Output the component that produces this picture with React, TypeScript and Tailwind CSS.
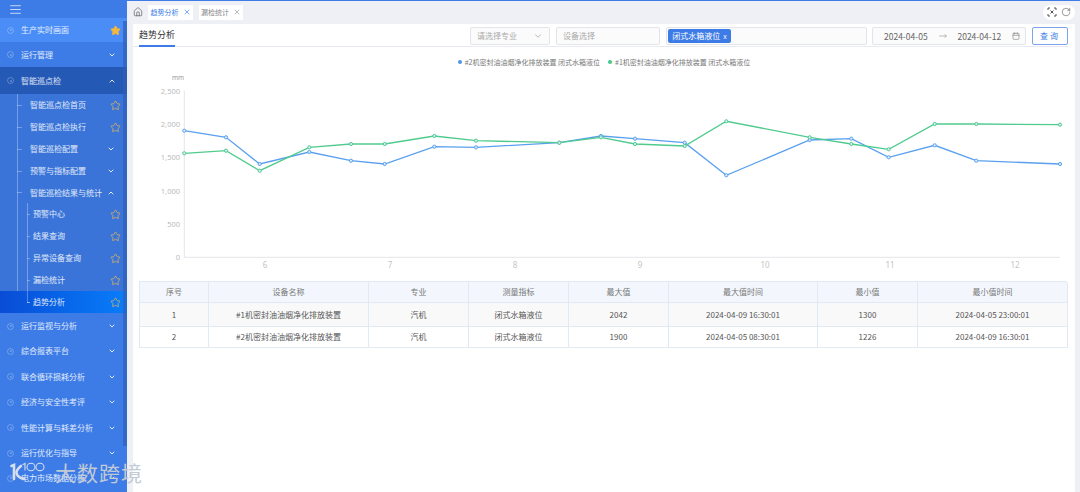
import React from "react";
import {
  AlignJustify,
  Calendar,
  ChevronDown,
  ChevronUp,
  Home,
  MoveRight,
  RotateCw,
  Star,
  X,
} from "lucide-react";

const topItems = ["运行监视与分析", "综合报表平台", "联合循环损耗分析", "经济与安全性考评", "性能计算与耗差分析", "运行优化与指导", "电力市场数据分析"];
const subItems = [
  { label: "智能巡点检首页", star: true },
  { label: "智能巡点检执行", star: true },
  { label: "智能巡检配置", down: true },
  { label: "预警与指标配置", down: true },
];
const leafItems = ["预警中心", "结果查询", "异常设备查询", "漏检统计"];

const xs = [184.3, 226, 259.7, 309.3, 351, 384.7, 434.3, 476, 559.3, 601, 635, 684.7, 726.3, 809.7, 851.3, 888.7, 934.7, 976.3, 1060];
const blueYs = [130.7, 137.3, 164, 152, 160.7, 164, 146.7, 147.3, 142.7, 136, 138.7, 142.7, 175.3, 140, 138.7, 157.3, 145.3, 160.7, 164];
const greenYs = [153.3, 150.7, 170.7, 147.3, 144, 144, 136, 140.7, 142.7, 137.3, 144, 146, 121.3, 137.3, 144, 149.3, 124, 124, 124.7];

const yTicks = [
  { label: "2,500", y: 90.7 },
  { label: "2,000", y: 124 },
  { label: "1,500", y: 157.3 },
  { label: "1,000", y: 190.7 },
  { label: "500", y: 224 },
  { label: "0", y: 257.3 },
];
const xTicks = [
  { label: "6", x: 265 },
  { label: "7", x: 390 },
  { label: "8", x: 515 },
  { label: "9", x: 640 },
  { label: "10", x: 765 },
  { label: "11", x: 890 },
  { label: "12", x: 1015 },
];

const columns = [
  { title: "序号", width: "w-[70px]" },
  { title: "设备名称", width: "w-[160px]" },
  { title: "专业", width: "w-[100px]" },
  { title: "测量指标", width: "w-[100px]" },
  { title: "最大值", width: "w-[100px]" },
  { title: "最大值时间", width: "w-[149px]" },
  { title: "最小值", width: "w-[100px]" },
  { title: "最小值时间", width: "w-[150px]" },
];
const rows = [
  ["1", "#1机密封油油烟净化排放装置", "汽机", "闭式水箱液位", "2042", "2024-04-09 16:30:01", "1300", "2024-04-05 23:00:01"],
  ["2", "#2机密封油油烟净化排放装置", "汽机", "闭式水箱液位", "1900", "2024-04-05 08:30:01", "1226", "2024-04-09 16:30:01"],
];

function Dot() {
  return <span className="w-[7px] h-[7px] rounded-full border border-white/25 mx-[7px] shrink-0 flex items-center justify-center"><span className="w-[2px] h-[2px] rounded-full bg-white/30" /></span>;
}

function OutlineStar() {
  return <Star size={11} strokeWidth={1.6} className="text-[#e3b65a] shrink-0" />;
}

function TopRow({ label, open }: { label: string; open?: boolean }) {
  return (
    <div className={`flex items-center pr-[12px] ${open ? "bg-[#2559b6] h-[27px]" : "h-[25.4px]"}`}>
      <Dot />
      <span className="flex-1 whitespace-nowrap">{label}</span>
      {open ? <ChevronUp size={8} strokeWidth={3} className="mr-[-1px]" /> : <ChevronDown size={8} strokeWidth={3} className="mr-[-1px]" />}
    </div>
  );
}

function Sidebar() {
  return (
    <aside className="relative w-[127px] h-full shrink-0 bg-[#3d7ce6] text-white/85 text-[8px] overflow-hidden">
      <div className="h-[17px] pl-[9px] flex items-center">
        <AlignJustify size={13} strokeWidth={1.3} className="text-white" />
      </div>
      <div className="h-[24px] flex items-center pr-[6px] bg-[#4a8df7]">
        <Dot />
        <span className="flex-1">生产实时画面</span>
        <Star size={11} className="text-[#f5b63c] fill-[#f5b63c]" />
      </div>
      <TopRow label="运行管理" />
      <TopRow label="智能巡点检" open />

      <div className="relative bg-[#3a74d8]">
        <span className="absolute left-[17px] top-0 bottom-[6px] w-px bg-white/30" />
        {subItems.map((item) => (
          <div key={item.label} className="h-[22px] flex items-center pl-[17px] pr-[6px]">
            <span className="w-[5px] h-px bg-white/30 mr-[8px]" />
            <span className="flex-1">{item.label}</span>
            {item.star ? <OutlineStar /> : <ChevronDown size={8} strokeWidth={3} className="mr-[6px]" />}
          </div>
        ))}
        <div className="h-[21px] flex items-center pl-[17px] pr-[12px]">
          <span className="w-[5px] h-px bg-white/30 mr-[8px]" />
          <span className="flex-1 whitespace-nowrap">智能巡检结果与统计</span>
          <ChevronUp size={8} strokeWidth={3} />
        </div>
        <div className="relative">
          <span className="absolute left-[27px] top-0 bottom-[10px] w-px bg-white/30" />
          {leafItems.map((label) => (
            <div key={label} className="h-[22px] flex items-center pl-[27px] pr-[6px]">
              <span className="w-[3px] h-px bg-white/30 mr-[3px]" />
              <span className="flex-1">{label}</span>
              <OutlineStar />
            </div>
          ))}
          <div className="h-[22px] flex items-center pl-[27px] pr-[6px] bg-gradient-to-r from-[#0a4cd6] to-[#0a7dfa]">
            <span className="w-[3px] h-px bg-white/50 mr-[3px]" />
            <span className="flex-1">趋势分析</span>
            <OutlineStar />
          </div>
        </div>
      </div>

      {topItems.map((label) => (
        <TopRow key={label} label={label} />
      ))}

      <span className="absolute right-0 top-[20px] w-[4px] h-[425px] bg-[#2d5fb8]/70" />
    </aside>
  );
}

function Watermark() {
  return (
    <div className="absolute left-[10px] top-[461px] flex items-start gap-[8px] pointer-events-none">
      <svg width="37" height="20" viewBox="0 0 37 20" fill="none" stroke="#d5deec" strokeLinecap="round">
        <path d="M1.5 4 L4 3 V17" strokeWidth="2.6" />
        <path d="M11 4 C8 6.5 6.5 8.5 6.5 10.5 C6.5 13.5 10 16 14 17" strokeWidth="2.6" />
        <path d="M13 2.5 L15 1.5 V8" strokeWidth="1.1" />
        <ellipse cx="21" cy="5" rx="4" ry="3.8" strokeWidth="1.1" />
        <ellipse cx="30" cy="5" rx="4" ry="3.8" strokeWidth="1.1" />
      </svg>
      <span className="text-[21px] leading-none tracking-[1px] text-[#c2cad6] font-['Noto_Sans_CJK_SC',sans-serif]">大数跨境</span>
    </div>
  );
}

function Toolbar() {
  return (
    <div className="h-[23px] flex items-center pl-[6px] pr-[5px] shrink-0 pb-[1px]">
      <Home size={10} strokeWidth={1.6} className="text-[#555] mr-[5px]" />
      <div className="flex items-center gap-[6px]">
        <div className="h-[15px] w-[45px] bg-white flex items-center justify-center gap-[4px] text-[7px] text-[#3d7ce6]">
          趋势分析 <X size={8} />
        </div>
        <div className="h-[15px] w-[44px] bg-white flex items-center justify-center gap-[4px] text-[7px] text-[#888]">
          漏检统计 <X size={8} className="text-[#999]" />
        </div>
      </div>
      <div className="ml-auto h-[15px] w-[32px] bg-white rounded-full flex items-center justify-center gap-[4px] text-[#555]">
        <svg width="10" height="10" viewBox="0 0 10 10" fill="none" stroke="currentColor" strokeWidth="1">
          <path d="M1 3V1H3M7 1H9V3M9 7V9H7M3 9H1V7" />
          <path d="M3.5 3.5L6.5 6.5M6.5 3.5L3.5 6.5" />
        </svg>
        <RotateCw size={10} strokeWidth={1.4} />
      </div>
    </div>
  );
}

function Filters() {
  const box = "h-[18px] border border-[#e2e5ea] rounded-[2px] flex items-center bg-[#fbfbfc]";
  return (
    <div className="h-[23px] flex border-b border-[#e8eaf0] pl-[6px] mr-[7px] relative">
      <div className="h-[23px] w-[36px] text-[9px] text-[#333] leading-[22px] border-b-2 border-[#3d7ce6] whitespace-nowrap">趋势分析</div>
      <div className="ml-auto flex gap-[6px] items-start text-[8px] pt-[3px]">
        <div className={`${box} w-[80px] px-[6px] text-[#aaa] justify-between`}>
          请选择专业 <ChevronDown size={10} />
        </div>
        <div className={`${box} w-[104px] px-[6px] text-[#aaa]`}>设备选择</div>
        <div className={`${box} w-[201px] pl-[1px]`}>
          <span className="h-[14px] w-[63px] rounded-[2px] bg-[#3d7ce6] text-white flex items-center justify-center gap-[3px] whitespace-nowrap">
            闭式水箱液位 <span className="text-[7px]">x</span>
          </span>
        </div>
        <div className={`${box} w-[154px] ml-[-1px] pl-[11px] pr-[5px] text-[#666] justify-between`}>
          <span className="text-[8.5px]">2024-04-05</span>
          <MoveRight size={8} className="text-[#999]" />
          <span className="text-[8.5px]">2024-04-12</span>
          <Calendar size={8} className="text-[#888]" />
        </div>
        <button className="h-[18px] w-[36px] border border-[#7aa5ec] rounded-[2px] text-[#3d7ce6] tracking-[2px]">查询</button>
      </div>
    </div>
  );
}

function Legend() {
  return (
    <div className="h-[25px] pt-[5px] flex items-center justify-center gap-[8px] text-[7px] text-[#777]">
      <span className="flex items-center gap-[3px]"><i className="w-[4px] h-[4px] rounded-full bg-[#4e95ea]" />#2机密封油油烟净化排放装置 闭式水箱液位</span>
      <span className="flex items-center gap-[3px]"><i className="w-[4px] h-[4px] rounded-full bg-[#3fc98a]" />#1机密封油油烟净化排放装置 闭式水箱液位</span>
    </div>
  );
}

function Series({ ys, color }: { ys: number[]; color: string }) {
  return (
    <g>
      <polyline points={xs.map((x, i) => `${x},${ys[i]}`).join(" ")} fill="none" stroke={color} strokeWidth="1.3" />
      {xs.map((x, i) => (
        <circle key={x} cx={x} cy={ys[i]} r="1.6" fill="#d8ecff" stroke={color} strokeWidth="1" />
      ))}
    </g>
  );
}

function Chart() {
  return (
    <svg width="942" height="203" viewBox="133 72 942 203" className="block" fontFamily="'Noto Sans', sans-serif">
      <text x="178" y="80" fontSize="6.5" fill="#999" textAnchor="middle">mm</text>
      <path d="M184.3 90.7 V257.3 H1060" fill="none" stroke="#e3e5ea" strokeWidth="1" />
      {yTicks.map((t) => (
        <text key={t.label} x="180" y={t.y + 3} fontSize="7.5" fill="#bbbbbb" textAnchor="end">{t.label}</text>
      ))}
      {xTicks.map((t) => (
        <text key={t.label} x={t.x} y="268" fontSize="8" fill="#c4c4c4" textAnchor="middle">{t.label}</text>
      ))}
      <Series ys={blueYs} color="#5aa0ee" />
      <Series ys={greenYs} color="#4fcb8d" />
    </svg>
  );
}

function DataTable() {
  return (
    <table className="ml-[6px] mt-[6px] w-[929px] table-fixed border-separate border-spacing-0 text-[8px] text-[#555] text-center">
      <thead>
        <tr className="h-[22px] bg-[#f3f7fd] text-[#777]">
          {columns.map((c, i) => (
            <th key={c.title} className={`${c.width} font-normal border-y border-r border-[#e1e9f5] ${i === 0 ? "border-l" : ""} ${i === 7 ? "rounded-tr-[4px]" : ""}`}>{c.title}</th>
          ))}
        </tr>
      </thead>
      <tbody>
        {rows.map((row, r) => (
          <tr key={r} className={`${r === 0 ? "h-[24px] bg-[#f9f9f9]" : "h-[21px] bg-white"}`}>
            {row.map((cell, i) => (
              <td key={i} className={`border-b border-r border-[#e1e9f5] ${i === 0 ? "border-l" : ""}`}>{cell}</td>
            ))}
          </tr>
        ))}
      </tbody>
    </table>
  );
}

export default function App() {
  return (
    <div className="relative w-[1080px] h-[492px] flex overflow-hidden bg-[#eef0f6] border-t border-[#3d7ce6] font-['Noto_Sans_CJK_SC','Noto_Sans',sans-serif]">
      <Sidebar />
      <main className="flex-1 min-w-0 flex flex-col">
        <Toolbar />
        <div className="flex-1 ml-[6px] mr-[5px] bg-white">
          <Filters />
          <Legend />
          <Chart />
          <DataTable />
        </div>
      </main>
      <Watermark />
    </div>
  );
}
